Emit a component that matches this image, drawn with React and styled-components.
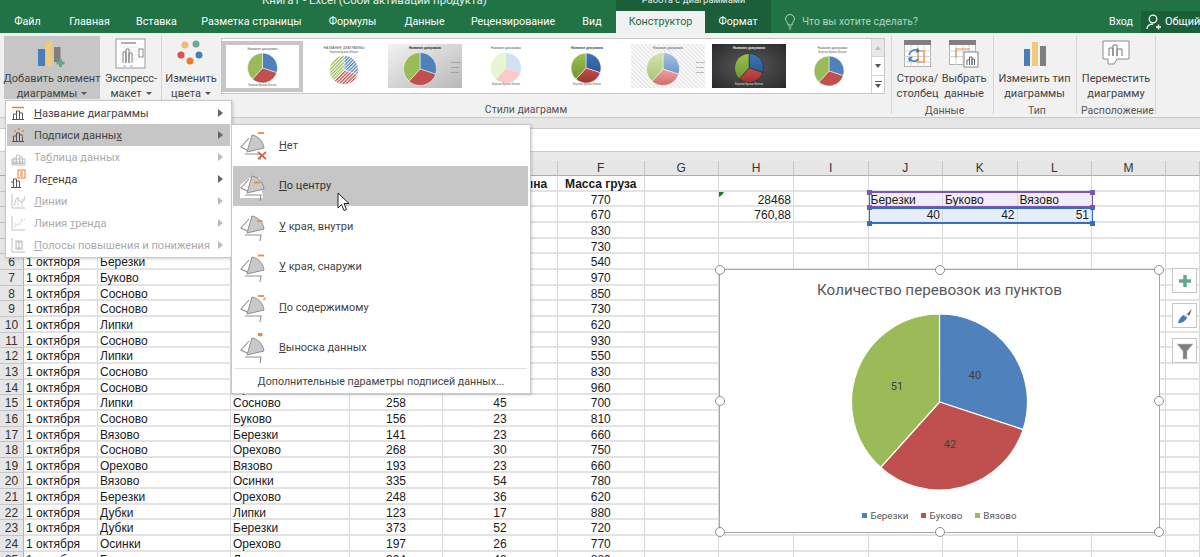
import React from "react";
import styled, { createGlobalStyle } from "styled-components";

const UI = 'Roboto, "Noto Sans", sans-serif';
const CELL = '"Liberation Sans", Arial, sans-serif';

const Global = createGlobalStyle`
  html, body { margin: 0; padding: 0; background: #fff; overflow: hidden; }
  * { box-sizing: border-box; }
`;

const Page = styled.div`
  position: relative; width: 1200px; height: 557px; overflow: hidden;
  font-family: ${UI}; background: #fff;
`;
/* ---------- title + tabs ---------- */
const TopBar = styled.header`background: #217346; color: #fff; height: 33px;`;
const TitleRow = styled.div`display: flex; height: 11px; overflow: hidden; font-size: 11.5px; line-height: 6px; color: #e3eee8;`;
const DocTitle = styled.div`width: 616px; padding-left: 262px; margin-top: -3px; white-space: nowrap;`;
const ContextBand = styled.div`width: 155px; background: #1b5e3a; text-align: center; font-size: 9.5px; span { display: block; margin-top: -3px; }`;
const TabRow = styled.nav`display: flex; height: 22px; font-size: 10.7px; line-height: 22px;`;
const Tab = styled.div`
  width: ${p => p.$w}px; text-align: center; white-space: nowrap; flex: none;
  background: ${p => (p.$active ? "#f1f1f1" : p.$dark ? "#1b5e3a" : "transparent")};
  color: ${p => (p.$active ? "#1f6b41" : "#fff")};
`;
const TellMe = styled.div`display: flex; align-items: center; gap: 6px; margin-left: 13px; color: #b5d3c2; font-size: 10.4px; white-space: nowrap;`;
const Spacer = styled.div`flex: 1;`;
const SignIn = styled.div`width: 23px; margin-right: 9px; flex: none; white-space: nowrap;`;
const Share = styled.div`width: 59px; flex: none; background: #1b5e3a; display: flex; align-items: center; gap: 3px; padding-left: 5px; font-size: 11px; white-space: nowrap; overflow: hidden; svg { flex: none; }`;

/* ---------- ribbon ---------- */
const Ribbon = styled.section`display: flex; height: 85px; background: #f1f1f1; border-bottom: 1px solid #c9c9c9; padding-top: 3px;`;
const Group = styled.div`
  width: ${p => p.$w}px; height: 78px; padding-left: ${p => p.$pl || 0}px; flex: none;
  border-right: ${p => (p.$noline ? "none" : "1px solid #d4d4d4")};
  display: flex; flex-direction: column; & > * { flex: none; }
`;
const GroupBody = styled.div`display: flex; gap: ${p => p.$gap || 2}px; height: 63px;`;
const GroupLabel = styled.div`
  height: 15px; margin-top: ${p => p.$mt || 4}px; text-align: center; font-size: 10.5px; line-height: 15px; color: #555; white-space: nowrap;
  ${p => (p.$w ? `width: ${p.$w}px;` : "")}
`;
const RibbonBtn = styled.div`
  width: ${p => p.$w}px; height: 63px; flex: none; display: flex; flex-direction: column; align-items: center;
  background: ${p => (p.$active ? "#c6c6c6" : "transparent")};
  font-size: 11px; line-height: 15px; color: #444; white-space: nowrap; text-align: center;
`;
const BtnIcon = styled.div`height: 35px; flex: none; display: flex; align-items: center; justify-content: center;`;
const Caret = styled.i`display: inline-block; margin-left: 4px; vertical-align: 2px; border: 3px solid transparent; border-top: 3px solid #555; border-bottom: 0;`;
const Gallery = styled.div`display: flex; width: 664px; height: 56px; margin-top: 2px; border: 1px solid #c6c6c6; background: #fff;`;
const ThumbRow = styled.div`flex: 1; display: flex; align-items: center; gap: 7px; overflow: hidden;`;
const ThumbFrame = styled.div`
  flex: none; line-height: 0;
  width: ${p => (p.$selected ? 81 : p.$wide ? 79 : 74)}px;
  ${p => (p.$selected ? "border: 4px solid #c6c6c6; margin-right: -3px;" : "")}
`;
const Scroller = styled.div`width: 13px; flex: none; display: flex; flex-direction: column; border-left: 1px solid #d4d4d4;`;
const ScrollBtn = styled.div`flex: 1; display: flex; flex-direction: column; gap: 2px; align-items: center; justify-content: center; background: ${p => (p.$off ? "#e8e8e8" : "#fff")}; & + & { border-top: 1px solid #d4d4d4; }`;
const Tri = styled.i`border: 3px solid transparent; ${p => (p.$up ? "border-bottom: 4px solid #c0c0c0; border-top: 0;" : "border-top: 4px solid #555; border-bottom: 0;")}`;
const Dash = styled.i`width: 7px; height: 1px; background: #555;`;

const FormulaGap = styled.div`height: 10px; background: #e6e6e6;`;
const FormulaBar = styled.div`height: 24px; background: #fff; border-top: 1px solid #c9c9c9; border-bottom: 1px solid #c9c9c9;`;
const HeaderStrip = styled.div`height: 9px; background: #e9e9e9;`;

/* ---------- sheet ---------- */
const Sheet = styled.div`
  display: grid;
  grid-template-columns: 24px 74px 133px 119px 93px 115px 86.5px 74.5px 75px 74.5px 74.5px 74.5px 74.5px 74px 34px;
  grid-template-rows: 15px repeat(25, 15.67px);
  font-family: ${CELL}; font-size: 12px; color: #1a1a1a;
`;
const ColHead = styled.div`background: #e6e6e6; border-right: 1px solid #c6c6c6; border-bottom: 1px solid #ababab; text-align: center; line-height: 15px; color: #333;`;
const RowHead = styled.div`background: #e6e6e6; border-right: 1px solid #b4b4b4; border-bottom: 1px solid #c6c6c6; text-align: center; line-height: 16.5px; color: #333;`;
const Cell = styled.div`
  border-right: 1px solid #d9d9d9; border-bottom: 2px solid #e3e3e3; line-height: 16.5px; padding: 0 2px;
  white-space: nowrap; text-align: ${p => p.$align || "left"}; font-weight: ${p => (p.$bold ? 700 : 400)};
  background: ${p => p.$tint || "transparent"};
`;
const Tick = styled.i`position: absolute; left: 719px; top: 192px; border: 2px solid transparent; border-top: 3px solid #1e7b34; border-left: 3px solid #1e7b34;`;
const RangeBox = styled.div`position: absolute; left: 868.5px; width: 224px; top: ${p => p.$top}px; height: 17px; border-top: 2px solid ${p => p.$c}; border-bottom: 2px solid ${p => p.$c}; border-left: 1px solid ${p => p.$c}; border-right: 1px solid ${p => p.$c}; pointer-events: none;`;
const RangeDot = styled.i`position: absolute; width: 5px; height: 5px; background: ${p => p.$c}; top: ${p => p.$t}px; ${p => p.$l != null ? `left: ${p.$l}px;` : "right: -3px;"}`;

/* ---------- menus ---------- */
const Menu = styled.div`
  position: absolute; left: 5px; top: 100px; width: 227px; height: 158px; background: #fff; padding: 1px;
  border: 1px solid #c9c9c9; box-shadow: 1px 1px 3px rgba(0,0,0,.18); font-size: 11.1px;
`;
const MenuItem = styled.div`
  display: flex; align-items: center; height: 22px; padding-left: 4px;
  background: ${p => (p.$hl ? "#c6c6c6" : "transparent")}; color: ${p => (p.$off ? "#ababab" : "#444")}; white-space: nowrap;
  span { margin-left: 5px; flex: 1; }
`;
const MenuIconBox = styled.div`width: 18px; height: 20px; flex: none; display: flex; align-items: center; justify-content: center;`;
const MenuArrow = styled.i`margin-right: 7px; border: 4px solid transparent; border-left: 5px solid ${p => (p.$off ? "#bbb" : "#666")}; border-right: 0;`;
const SubMenu = styled.div`
  position: absolute; left: 231px; top: 124px; width: 300px; height: 270px; background: #fff; padding: 0 1px 1px;
  border: 1px solid #c9c9c9; box-shadow: 1px 1px 3px rgba(0,0,0,.18); font-size: 11px; color: #444;
  display: flex; flex-direction: column;
`;
const SubItem = styled.div`
  display: flex; flex: none; align-items: center; gap: 10px; height: 40.5px; padding-left: 6px; margin-right: 1px;
  background: ${p => (p.$hl ? "#c6c6c6" : "transparent")}; white-space: nowrap; color: ${p => (p.$hl ? "#333" : "#444")};
`;
const SubFooter = styled.div`margin: 0 2px; border-top: 1px solid #e0e0e0; flex: 1; text-align: center; font-size: 10.7px; line-height: 26px; white-space: nowrap;`;
const CursorBox = styled.div`position: absolute; left: 337px; top: 192px; line-height: 0;`;

/* ---------- chart ---------- */
const Chart = styled.div`
  position: absolute; left: 719px; top: 269px; width: 441px; height: 264px; background: #fff;
  border: 1.5px solid #a6a6a6; display: flex; flex-direction: column; align-items: center; color: #595959;
`;
const ChartTitle = styled.div`margin-top: 9px; font-size: 15.2px; line-height: 22px; white-space: nowrap;`;
const PieBox = styled.div`margin-top: 12px; height: 178px; line-height: 0;`;
const Legend = styled.div`display: flex; gap: 13px; margin-top: 17px; font-size: 9.8px; line-height: 15px;`;
const LegendItem = styled.div`display: flex; align-items: center; gap: 3px; &::before { content: ""; width: 5px; height: 5px; background: ${p => p.$c}; }`;
const Handle = styled.i`
  position: absolute; width: 10px; height: 10px; border-radius: 50%; background: #fff; border: 1.5px solid #8f8f8f;
  left: ${p => p.$x}%; top: ${p => p.$y}%; transform: translate(-50%, -50%);
`;
const SideBtn = styled.div`
  position: absolute; left: 1172px; top: ${p => p.$top}px; width: 25px; height: 25px; background: #fff;
  border: 1px solid #c6c6c6; display: flex; align-items: center; justify-content: center;
`;

/* ---------- drawings ---------- */
const polar = (cx, cy, r, a) => [cx + r * Math.sin(a), cy - r * Math.cos(a)];
const sectors = (cx, cy, r, vals = [40, 42, 51]) => {
  const t = vals.reduce((a, b) => a + b, 0);
  let a = 0;
  return vals.map(v => {
    const e = a + (v / t) * Math.PI * 2;
    const [x1, y1] = polar(cx, cy, r, a), [x2, y2] = polar(cx, cy, r, e);
    const d = `M${cx} ${cy}L${x1} ${y1}A${r} ${r} 0 ${e - a > Math.PI ? 1 : 0} 1 ${x2} ${y2}Z`;
    a = e;
    return d;
  });
};
const COLORS = ["#4f81bd", "#c0504d", "#9bbb59"];

const MiniPie = ({ cx, cy, r, fills = COLORS, stroke = "#fff", sw = .5 }) => (
  <>{sectors(cx, cy, r).map((d, i) => <path key={i} d={d} fill={fills[i]} stroke={stroke} strokeWidth={sw} />)}</>
);
const MiniLegend = ({ x, y, fill = "#666" }) => (
  <text x={x} y={y} fontSize="2.6" fill={fill} fontFamily={CELL} textAnchor="middle">Березки  Буково  Вязово</text>
);
const SideLegend = ({ x, fill = "#666" }) => (
  <g fontSize="2.4" fill={fill} fontFamily={CELL}>
    <text x={x} y="19">Березки</text><text x={x} y="24">Буково</text><text x={x} y="29">Вязово</text>
  </g>
);
const ThumbTitle = ({ w = 74, fill = "#555", bold, size = 3.2, children }) => (
  <text x={w / 2} y="5" fontSize={size} fontWeight={bold ? 700 : 400} fill={fill} textAnchor="middle" fontFamily={CELL}>{children}</text>
);

const Defs = () => (
  <svg width="0" height="0" style={{ position: "absolute" }}>
    <defs>
      {[["hb", "#4f81bd"], ["hr", "#c0504d"], ["hg", "#9bbb59"]].map(([id, c]) => (
        <pattern key={id} id={id} width="2.4" height="2.4" patternUnits="userSpaceOnUse" patternTransform="rotate(45)">
          <rect width="1.3" height="2.4" fill={c} />
        </pattern>
      ))}
      <pattern id="hbg" width="3" height="3" patternUnits="userSpaceOnUse" patternTransform="rotate(-45)">
        <rect width="3" height="3" fill="#fff" /><rect width="1.5" height="3" fill="#e4e4e4" />
      </pattern>
      <linearGradient id="gg" x1="0" x2="1" y1="0" y2="1"><stop offset="0" stopColor="#f2f2f2" /><stop offset="1" stopColor="#b8b8b8" /></linearGradient>
      <radialGradient id="gd" cx=".5" cy=".5" r=".7"><stop offset="0" stopColor="#5a5a5a" /><stop offset="1" stopColor="#2a2a2a" /></radialGradient>
      <linearGradient id="b5" x1="0" x2="0" y1="0" y2="1"><stop offset="0" stopColor="#3f74b5" /><stop offset="1" stopColor="#2a5a96" /></linearGradient>
      <linearGradient id="r5" x1="0" x2="0" y1="0" y2="1"><stop offset="0" stopColor="#c5504c" /><stop offset="1" stopColor="#9a3230" /></linearGradient>
      <linearGradient id="g5" x1="0" x2="0" y1="0" y2="1"><stop offset="0" stopColor="#9cc24e" /><stop offset="1" stopColor="#6f9533" /></linearGradient>
      <linearGradient id="b6" x1="0" x2="0" y1="0" y2="1"><stop offset="0" stopColor="#a9c3e2" /><stop offset="1" stopColor="#6c96c9" /></linearGradient>
      <linearGradient id="r6" x1="0" x2="0" y1="0" y2="1"><stop offset="0" stopColor="#eaa6a4" /><stop offset="1" stopColor="#cf6a67" /></linearGradient>
      <linearGradient id="g6" x1="0" x2="0" y1="0" y2="1"><stop offset="0" stopColor="#d6e3b4" /><stop offset="1" stopColor="#a9c474" /></linearGradient>
    </defs>
  </svg>
);

const THUMBS = [
  { w: 73, h: 43, pie: [36.5, 23, 15], title: "Название диаграммы", legend: 41 },
  { w: 74, h: 44, pie: [37, 26, 14.5], title: "НАЗВАНИЕ ДИАГРАММЫ", fills: ["url(#hb)", "url(#hr)", "url(#hg)"], top: 1, stroke: "#fff" },
  { w: 74, h: 44, bg: "url(#gg)", pie: [32, 25, 16.5], title: "Название диаграммы", bold: 1, side: 63, fill: "#222" },
  { w: 74, h: 44, pie: [37, 24, 15], title: "Название диаграммы", fills: ["#cfe0f7", "#fbc9c8", "#e6f7cf"], legend: 41, stroke: "#e8e8e8" },
  { w: 74, h: 44, pie: [36, 24, 15], title: "Название диаграммы", bold: 1, fills: ["url(#b5)", "url(#r5)", "url(#g5)"], legend: 41, fill: "#1f497d" },
  { w: 74, h: 44, bg: "url(#hbg)", pie: [32, 25, 16.5], title: "Название диаграммы", fills: ["url(#b6)", "url(#r6)", "url(#g6)"], side: 65 },
  { w: 74, h: 44, bg: "url(#gd)", pie: [37, 24, 14.5], title: "Название диаграммы", bold: 1, fills: ["url(#b5)", "url(#r5)", "url(#g5)"], legend: 41, fill: "#eee", stroke: "#222" },
  { w: 79, h: 44, pie: [36, 27, 15], title: "Название диаграммы", top: 1, fills: COLORS, wide: 1 },
];
const Thumb = ({ t, i }) => (
  <ThumbFrame $selected={i === 0} $wide={t.wide}>
    <svg width={t.w} height={t.h} viewBox={`0 0 ${t.w} ${t.h}`}>
      <rect width={t.w} height={t.h} fill={t.bg || "#fff"} />
      <ThumbTitle w={t.w} bold={t.bold} fill={t.fill} size={i === 1 ? 3.4 : 3}>{t.title}</ThumbTitle>
      {t.top ? <MiniLegend x={t.w / 2} y={9} /> : null}
      <MiniPie cx={t.pie[0]} cy={t.pie[1]} r={t.pie[2]} fills={t.fills} stroke={t.stroke} />
      {t.legend ? <MiniLegend x={t.w / 2} y={t.legend} fill={t.fill === "#eee" ? "#ddd" : "#666"} /> : null}
      {t.side ? <SideLegend x={t.side} /> : null}
    </svg>
  </ThumbFrame>
);

const AddIcon = () => (
  <svg width="30" height="30" viewBox="0 0 30 30">
    <rect x="1" y="10" width="7" height="17" fill="#4a7ebb" />
    <rect x="9" y="3" width="6.5" height="24" fill="#f1c97a" />
    <rect x="17" y="8" width="6.5" height="15" fill="#7f7f7f" />
    <path d="M19.5 24h8M23.5 20v8" stroke="#5fa88a" strokeWidth="3" fill="none" />
  </svg>
);
const ExpressIcon = () => (
  <svg width="32" height="32" viewBox="0 0 32 32">
    <rect x="1" y="1" width="29" height="29" fill="#fff" stroke="#9a9a9a" />
    <path d="M6 5h15" stroke="#777" strokeWidth="1.2" />
    <path d="M5 9h18M5 13h18M5 17h18M5 21h18" stroke="#ddd" strokeWidth=".7" />
    <path d="M8 25V14h3v11M11 25V11h3v14M14 25V15h3v10" stroke="#777" fill="#fff" strokeWidth=".9" />
    <rect x="24" y="11" width="4" height="8" fill="#fff" stroke="#888" />
    <path d="M8 28h3M15 28h3" stroke="#aaa" />
  </svg>
);
const ColorsIcon = () => (
  <svg width="30" height="30" viewBox="0 0 30 30">
    <circle cx="9" cy="6" r="3.5" fill="#f0b979" /><circle cx="20" cy="5" r="3.5" fill="#6fa899" />
    <circle cx="5" cy="16" r="3.5" fill="#e2504b" /><circle cx="23" cy="16" r="3.5" fill="#4a7ebb" />
    <circle cx="14" cy="22" r="3.5" fill="#ea7a26" />
  </svg>
);
const SwitchIcon = () => (
  <svg width="28" height="28" viewBox="0 0 28 28">
    <rect x=".5" y=".5" width="26" height="26" fill="#fff" stroke="#b0b0b0" />
    <rect x="0" y="0" width="27" height="5" fill="#7f7f7f" />
    <path d="M0 11h27M0 16.5h27M0 22h27M7 5v22M14 5v22M20 5v22" stroke="#d4d4d4" />
    <rect x="14" y="11" width="6" height="11" fill="none" stroke="#ed8a3a" strokeWidth="1.2" />
    <path d="M5 15c1-4 5-6 9-5M15 11l-2-2.500M15 11l-3 1" stroke="#3d7ac0" strokeWidth="1.500" fill="none" />
    <path d="M14 19c-2 3-6 3-8 0M5 18l.5 3.500M5 18l3.500-.500" stroke="#3d7ac0" strokeWidth="1.500" fill="none" />
  </svg>
);
const SelectIcon = () => (
  <svg width="30" height="28" viewBox="0 0 30 28">
    <rect x=".5" y=".5" width="26" height="24" fill="#fff" stroke="#b0b0b0" />
    <rect x="0" y="0" width="27" height="5" fill="#7f7f7f" />
    <path d="M0 11h27M0 16.5h27M7 5v20M14 5v20M20 5v20" stroke="#d4d4d4" />
    <path d="M7 18V9h14" stroke="#ed8a3a" fill="none" strokeWidth="1.2" />
    <rect x="15" y="12" width="14" height="15" fill="#fff" stroke="#888" />
    <path d="M18 25v-5h2.500v5M20.500 25v-8h2.500v8M23 25v-6h2.500v6" fill="#fff" stroke="#666" />
  </svg>
);
const TypeIcon = () => (
  <svg width="24" height="26" viewBox="0 0 24 26">
    <rect x="1" y="8" width="6" height="17" fill="#4a7ebb" />
    <rect x="9" y="1" width="6" height="24" fill="#f1c97a" />
    <rect x="17" y="5" width="6" height="20" fill="#7f7f7f" />
  </svg>
);
const MoveIcon = () => (
  <svg width="28" height="28" viewBox="0 0 28 28">
    <path d="M1 1h26v18H15l-3 5H6v-5H1z" fill="#fff" stroke="#8c8c8c" />
    <path d="M7 16V8h4v8M11 16V5h4v11M15 16V9h5v7" fill="#fff" stroke="#777" />
  </svg>
);

const MiniBars = ({ c = "#555" }) => (
  <g fill="none" stroke={c} strokeWidth="1">
    <path d="M2.500 16v-5h3v5M5.500 16V8h3v8M8.500 16v-6h3v6M1 16.500h12" />
  </g>
);
const MenuIcon = ({ kind }) => {
  const off = ["table", "lines", "trend", "bars"].includes(kind);
  const c = off ? "#c0c0c0" : "#555";
  return (
    <svg width="18" height="20" viewBox="0 0 18 20">
      {kind === "title" && <><path d="M1 4.500h12" stroke="#ed7d31" strokeWidth="1.500" /><MiniBars /></>}
      {kind === "labels" && <><MiniBars /><path d="M3 6h2M7 4h2M11 6h2M3 11h1M11 11h1" stroke="#ed7d31" strokeWidth="1.500" /></>}
      {kind === "table" && <><MiniBars c={c} /><path d="M1 12h13v6H1zM1 15h13M5 12v6M9 12v6" stroke={c} fill="none" /></>}
      {kind === "legend" && <><g transform="translate(-3 2)"><MiniBars /></g><rect x="7" y="1" width="7" height="8" fill="#fff" stroke="#ed7d31" /><path d="M9 3h3M9 5h3M9 7h3" stroke="#ed7d31" /></>}
      {kind === "lines" && <><path d="M1 3v14h13" stroke={c} fill="none" /><path d="M3 15c2-3 1-7 3-8s2 5 5 4 2-5 3-6" stroke={c} fill="none" /><path d="M7 7v9M11 7v9" stroke={c} strokeWidth=".6" /></>}
      {kind === "trend" && <><path d="M1 3v14h13" stroke={c} fill="none" /><path d="M3 14l11-8" stroke={c} strokeDasharray="2 1" /><path d="M4 11h1M8 12h1M10 6h1" stroke={c} /></>}
      {kind === "bars" && <><path d="M1 3v14h13" stroke={c} fill="none" /><path d="M4 6l8 0M8 6v9M4 14h8" stroke={c} /><rect x="5" y="7" width="6" height="6" fill="none" stroke={c} /></>}
    </svg>
  );
};

const DASHES = {
  none: <><path d="M19 4h6" stroke="#ed8a3a" strokeWidth="1.800" /><path d="M19 23l8 7M27 23l-8 7" stroke="#d9664f" strokeWidth="1.800" /></>,
  center: <path d="M15 12.500h6" stroke="#ed8a3a" strokeWidth="1.800" />,
  inner: <path d="M18 11h5.500" stroke="#ed8a3a" strokeWidth="1.800" />,
  outer: <path d="M19 4.500h6" stroke="#ed8a3a" strokeWidth="1.800" />,
  fit: <><path d="M19 5h6" stroke="#ed8a3a" strokeWidth="1.800" /><path d="M26 6v2.500h-2" stroke="#ed8a3a" fill="none" /></>,
  call: <path d="M19 1h4.500v3h-1.500l-1 1.500v-1.500h-2z" fill="#ed8a3a" />,
};
const LabelIcon = ({ kind, hl }) => (
  <svg width="30" height="32" viewBox="0 0 30 32">
    {hl && <path d="M1 15L10 8h11l3 20H1z" fill="#fff" />}
    <path d="M13 6C19 7 24 12 25 19L8 23z" fill="#c9c9c9" stroke="#8f8f8f" />
    <path d="M10 9L2 18l6 3" fill="none" stroke="#8f8f8f" strokeWidth="1.100" />
    <path d="M6 25h16l-1 6" fill="none" stroke="#8f8f8f" strokeWidth="1.100" />
    {DASHES[kind]}
  </svg>
);
const ArrowCursor = () => (
  <svg width="14" height="20" viewBox="0 0 14 20">
    <path d="M1 1v15l3.500-3.500 2.500 6 2.500-1-2.500-6h5z" fill="#fff" stroke="#222" />
  </svg>
);
const BulbIcon = () => (
  <svg width="12" height="16" viewBox="0 0 12 16" fill="none" stroke="#b5d3c2">
    <path d="M4 11C4 8 1.500 7.500 1.500 5a4.500 4.500 0 0 1 9 0C10.500 7.500 8 8 8 11zM4.500 13h3M5 15h2" />
  </svg>
);
const PersonIcon = () => (
  <svg width="16" height="16" viewBox="0 0 16 16" fill="none" stroke="#fff" strokeWidth="1.300">
    <circle cx="7" cy="5" r="3.800" />
    <path d="M1 15c0-3 2.500-5 6-5M10 13h5M12.500 10.500v5" />
  </svg>
);

const TABS = [
  ["Файл", 55], ["Главная", 69], ["Вставка", 65], ["Разметка страницы", 125], ["Формулы", 77],
  ["Данные", 67], ["Рецензирование", 110], ["Вид", 48], ["Конструктор", 89, "active"], ["Формат", 66, "dark"],
];
const COLS = ["A", "B", "C", "D", "E", "F", "G", "H", "I", "J", "K", "L", "M"];
const B = ["Пункт отправления","Сосново","Орехово","Липки","Вязово","Березки","Буково","Сосново","Сосново","Липки","Сосново","Липки","Сосново","Сосново","Липки","Сосново","Вязово","Сосново","Орехово","Вязово","Березки","Дубки","Дубки","Осинки","Березки"];
const C = ["Пункт назначения","Буково","Липки","Сосново","Осинки","Вязово","Орехово","Липки","Дубки","Березки","Вязово","Осинки","Буково","Орехово","Сосново","Буково","Березки","Орехово","Вязово","Осинки","Орехово","Липки","Березки","Орехово","Липки"];
const D = ["Расстояние",210,188,244,172,301,265,157,139,288,176,205,233,194,258,156,141,268,193,335,248,123,373,197,304];
const E = ["Расход бензина",30,28,33,24,41,36,22,19,39,25,29,32,27,45,23,23,30,23,54,36,17,52,26,42];
const F = ["Масса груза",770,670,830,730,540,970,850,730,620,930,550,830,960,700,810,660,750,660,780,620,880,720,770,880];
const H = { 1: "28468", 2: "760,88" };
const TINT = { 1: ["Березки", "Буково", "Вязово"], 2: [40, 42, 51] };

const App = () => (
  <Page>
    <Global />
    <Defs />
    <TopBar>
      <TitleRow>
        <DocTitle>Книга1 - Excel (Сбой активации продукта)</DocTitle>
        <ContextBand><span>Работа с диаграммами</span></ContextBand>
      </TitleRow>
      <TabRow>
        {TABS.map(([t, w, m]) => <Tab key={t} $w={w} $active={m === "active"} $dark={m === "dark"}>{t}</Tab>)}
        <TellMe><BulbIcon />Что вы хотите сделать?</TellMe>
        <Spacer />
        <SignIn>Вход</SignIn>
        <Share><PersonIcon />Общий</Share>
      </TabRow>
    </TopBar>

    <Ribbon>
      <Group $w={162} $pl={4}>
        <GroupBody>
          <RibbonBtn $w={96} $active>
            <BtnIcon><AddIcon /></BtnIcon>
            <div>Добавить элемент</div><div>диаграммы<Caret /></div>
          </RibbonBtn>
          <RibbonBtn $w={58}>
            <BtnIcon><ExpressIcon /></BtnIcon>
            <div>Экспресс-</div><div>макет<Caret /></div>
          </RibbonBtn>
        </GroupBody>
      </Group>
      <Group $w={59} $noline>
        <GroupBody>
          <RibbonBtn $w={58}>
            <BtnIcon><ColorsIcon /></BtnIcon>
            <div>Изменить</div><div>цвета<Caret /></div>
          </RibbonBtn>
        </GroupBody>
      </Group>
      <Group $w={671}>
        <Gallery>
          <ThumbRow>{THUMBS.map((t, i) => <Thumb key={i} t={t} i={i} />)}</ThumbRow>
          <Scroller>
            <ScrollBtn $off><Tri $up /></ScrollBtn>
            <ScrollBtn><Tri /></ScrollBtn>
            <ScrollBtn><Dash /><Tri /></ScrollBtn>
          </Scroller>
        </Gallery>
        <GroupLabel $w={610} $mt={8}>Стили диаграмм</GroupLabel>
      </Group>
      <Group $w={102} $pl={4}>
        <GroupBody $gap={2}>
          <RibbonBtn $w={43}><BtnIcon><SwitchIcon /></BtnIcon><div>Строка/</div><div>столбец</div></RibbonBtn>
          <RibbonBtn $w={46}><BtnIcon><SelectIcon /></BtnIcon><div>Выбрать</div><div>данные</div></RibbonBtn>
        </GroupBody>
        <GroupLabel>Данные</GroupLabel>
      </Group>
      <Group $w={83} $pl={4}>
        <GroupBody>
          <RibbonBtn $w={73}><BtnIcon><TypeIcon /></BtnIcon><div>Изменить тип</div><div>диаграммы</div></RibbonBtn>
        </GroupBody>
        <GroupLabel>Тип</GroupLabel>
      </Group>
      <Group $w={79} $pl={3}>
        <GroupBody>
          <RibbonBtn $w={72}><BtnIcon><MoveIcon /></BtnIcon><div>Переместить</div><div>диаграмму</div></RibbonBtn>
        </GroupBody>
        <GroupLabel>Расположение</GroupLabel>
      </Group>
    </Ribbon>

    <FormulaGap />
    <FormulaBar />
    <HeaderStrip />

    <Sheet>
      <ColHead />
      {COLS.map(c => <ColHead key={c}>{c}</ColHead>)}
      <ColHead />
      {B.map((_, r) => (
        <React.Fragment key={r}>
          <RowHead>{r + 1}</RowHead>
          <Cell>{r === 0 ? "Дата" : "1 октября"}</Cell>
          <Cell $bold={r === 0} $align={r === 0 ? "center" : "left"}>{B[r]}</Cell>
          <Cell $bold={r === 0} $align={r === 0 ? "center" : "left"}>{C[r]}</Cell>
          <Cell $bold={r === 0} $align="center">{D[r]}</Cell>
          <Cell $bold={r === 0} $align="center">{E[r]}</Cell>
          <Cell $bold={r === 0} $align="center">{F[r]}</Cell>
          <Cell />
          <Cell $align="right">{H[r] || ""}</Cell>
          <Cell />
          {[0, 1, 2].map(c => (
            <Cell key={c} $tint={r === 1 ? "#f1ecf7" : r === 2 ? "#e8eef8" : null} $align={r === 2 ? "right" : "left"}>
              {TINT[r] ? TINT[r][c] : ""}
            </Cell>
          ))}
          <Cell />
          <Cell />
        </React.Fragment>
      ))}
    </Sheet>

    <Tick />
    <RangeBox $top={191} $c="#7e57b2">
      <RangeDot $c="#7e57b2" $t={-3} $l={-3} /><RangeDot $c="#7e57b2" $t={-3} />
      <RangeDot $c="#7e57b2" $t={12} $l={-3} /><RangeDot $c="#7e57b2" $t={12} />
    </RangeBox>
    <RangeBox $top={207} $c="#2f6fc4">
      <RangeDot $c="#2f6fc4" $t={12} $l={-3} /><RangeDot $c="#2f6fc4" $t={12} />
    </RangeBox>

    <Chart>
      <ChartTitle>Количество перевозок из пунктов</ChartTitle>
      <PieBox>
        <svg width="180" height="178" viewBox="0 0 180 178">
          {sectors(89.5, 89, 88).map((d, i) => <path key={i} d={d} fill={COLORS[i]} stroke="#fff" strokeWidth="1.200" />)}
          <g fontSize="11" fill="#404040" fontFamily={UI} textAnchor="middle">
            <text x="125" y="66">40</text><text x="100" y="135">42</text><text x="47" y="77">51</text>
          </g>
        </svg>
      </PieBox>
      <Legend>
        <LegendItem $c={COLORS[0]}>Березки</LegendItem>
        <LegendItem $c={COLORS[1]}>Буково</LegendItem>
        <LegendItem $c={COLORS[2]}>Вязово</LegendItem>
      </Legend>
      {[[0,0],[50,0],[100,0],[0,50],[100,50],[0,100],[50,100],[100,100]].map(([x, y]) => <Handle key={`${x}-${y}`} $x={x} $y={y} />)}
    </Chart>

    <SideBtn $top={268}>
      <svg width="14" height="14" viewBox="0 0 14 14"><path d="M7 1v12M1 7h12" stroke="#5fa88a" strokeWidth="3.500" /></svg>
    </SideBtn>
    <SideBtn $top={303}>
      <svg width="18" height="18" viewBox="0 0 18 18">
        <path d="M11 7l5-5-3 7z" fill="#595959" /><path d="M2 16c1-4 3-7 6-8l3 2c-1 4-5 6-9 6z" fill="#3f78bf" /><path d="M8 9l3-3 1 1-3 3z" fill="#c9d7ea" />
      </svg>
    </SideBtn>
    <SideBtn $top={338}>
      <svg width="18" height="18" viewBox="0 0 18 18"><path d="M1 2h16l-6 7v8H7V9z" fill="#7f7f7f" stroke="#c4c4c4" strokeWidth=".6" /></svg>
    </SideBtn>

    <Menu>
      <MenuItem><MenuIconBox><MenuIcon kind="title" /></MenuIconBox><span><u>Н</u>азвание диаграммы</span><MenuArrow /></MenuItem>
      <MenuItem $hl><MenuIconBox><MenuIcon kind="labels" /></MenuIconBox><span>Подписи данны<u>х</u></span><MenuArrow /></MenuItem>
      <MenuItem $off><MenuIconBox><MenuIcon kind="table" /></MenuIconBox><span>Та<u>б</u>лица данных</span><MenuArrow $off /></MenuItem>
      <MenuItem><MenuIconBox><MenuIcon kind="legend" /></MenuIconBox><span>Ле<u>г</u>енда</span><MenuArrow /></MenuItem>
      <MenuItem $off><MenuIconBox><MenuIcon kind="lines" /></MenuIconBox><span><u>Л</u>инии</span><MenuArrow $off /></MenuItem>
      <MenuItem $off><MenuIconBox><MenuIcon kind="trend" /></MenuIconBox><span>Линия <u>т</u>ренда</span><MenuArrow $off /></MenuItem>
      <MenuItem $off><MenuIconBox><MenuIcon kind="bars" /></MenuIconBox><span><u>П</u>олосы повышения и понижения</span><MenuArrow $off /></MenuItem>
    </Menu>
    <SubMenu>
      <SubItem><LabelIcon kind="none" /><div><u>Н</u>ет</div></SubItem>
      <SubItem $hl><LabelIcon kind="center" hl /><div><u>П</u>о центру</div></SubItem>
      <SubItem><LabelIcon kind="inner" /><div><u>У</u> края, внутри</div></SubItem>
      <SubItem><LabelIcon kind="outer" /><div><u>У</u> края, снаружи</div></SubItem>
      <SubItem><LabelIcon kind="fit" /><div><u>П</u>о содержимому</div></SubItem>
      <SubItem><LabelIcon kind="call" /><div><u>В</u>ыноска данных</div></SubItem>
      <SubFooter>Дополнительные п<u>а</u>раметры подписей данных...</SubFooter>
    </SubMenu>
    <CursorBox><ArrowCursor /></CursorBox>
  </Page>
);

export default App;
